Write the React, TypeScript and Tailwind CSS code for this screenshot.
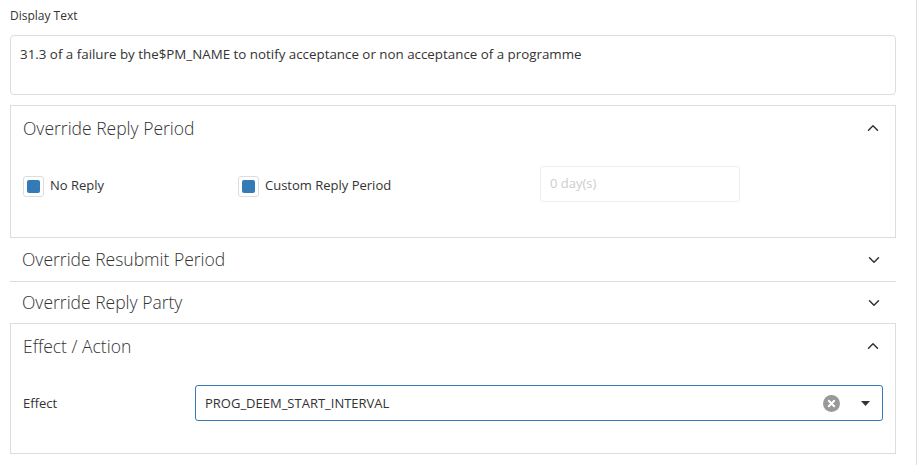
import { ChevronUp, ChevronDown } from 'lucide-react';

function Checkbox({ label }: { label: string }) {
  return (
    <label className="flex items-center gap-[6px]">
      <span className="w-[21px] h-[21px] border border-[#ddd] rounded-[3px] bg-white flex items-center justify-center">
        <span className="w-[13px] h-[13px] rounded-[2px] bg-[#337ab7]" />
      </span>
      <span className="text-[13px] text-[#333]">{label}</span>
    </label>
  );
}

function PanelHeader({ title, open, h = 'h-[44px]' }: { title: string; open: boolean; h?: string }) {
  return (
    <div className={`flex items-center justify-between pl-[12px] pr-[13px] ${h}`}>
      <span className="text-[17.5px] text-[#333] font-[350]">{title}</span>
      {open ? (
        <ChevronUp size={18} strokeWidth={2} className="text-[#333]" />
      ) : (
        <ChevronDown size={18} strokeWidth={2} className="text-[#333]" />
      )}
    </div>
  );
}

export default function App() {
  return (
    <div
      className="w-[917px] h-[465px] bg-white border-r border-[#ddd] overflow-hidden"
      style={{ fontFamily: '"Open Sans", "Noto Sans", sans-serif' }}
    >
      <div className="w-[886px] ml-[10px] pt-[7px]">
        {/* Display text */}
        <div className="text-[12px] text-[#333] mb-[10px]">Display Text</div>
        <div className="h-[60px] border border-[#ddd] rounded-[4px] px-[9px] pt-[8px] text-[13.35px] text-[#333]">
          31.3 of a failure by the$PM_NAME to notify acceptance or non acceptance of a programme
        </div>

        {/* Override Reply Period (open) */}
        <div className="mt-[10px] border border-[#ddd] h-[133px]">
          <PanelHeader title="Override Reply Period" open />
          <div className="flex items-center pl-[12px] mt-[16px]">
            <div className="w-[215px] pt-[4px]">
              <Checkbox label="No Reply" />
            </div>
            <div className="w-[302px] pt-[4px]">
              <Checkbox label="Custom Reply Period" />
            </div>
            <div className="w-[200px] h-[36px] border border-[#eee] rounded-[3px] flex items-center px-[9px] text-[13px] text-[#ccc]">
              0 day(s)
            </div>
          </div>
        </div>

        {/* Collapsed rows */}
        <div className="border-b border-[#ddd]">
          <PanelHeader title="Override Resubmit Period" open={false} h="h-[43px]" />
        </div>
        <PanelHeader title="Override Reply Party" open={false} h="h-[41px]" />

        {/* Effect / Action (open) */}
        <div className="border border-[#ddd] h-[131px]">
          <PanelHeader title="Effect / Action" open />
          <div className="flex items-center pl-[12px] pr-[12px] mt-[17px]">
            <div className="w-[172px] text-[13px] text-[#333] pt-[1px]">Effect</div>
            <div className="flex-1 h-[36px] border border-[#337ab7] rounded-[3px] flex items-center pl-[9px] pr-[12px]">
              <span className="flex-1 text-[13px] text-[#333] pt-[1px]">PROG_DEEM_START_INTERVAL</span>
              <span className="w-[17px] h-[17px] rounded-full bg-[#999] flex items-center justify-center">
                <svg width="9" height="9" viewBox="0 0 10 10">
                  <path d="M2 2L8 8M8 2L2 8" stroke="white" strokeWidth="2.2" strokeLinecap="round" />
                </svg>
              </span>
              <svg width="9" height="5" viewBox="0 0 9 5" className="ml-[21px]">
                <path d="M0 0H9L4.5 5Z" fill="#333" />
              </svg>
            </div>
          </div>
        </div>
      </div>
    </div>
  );
}
